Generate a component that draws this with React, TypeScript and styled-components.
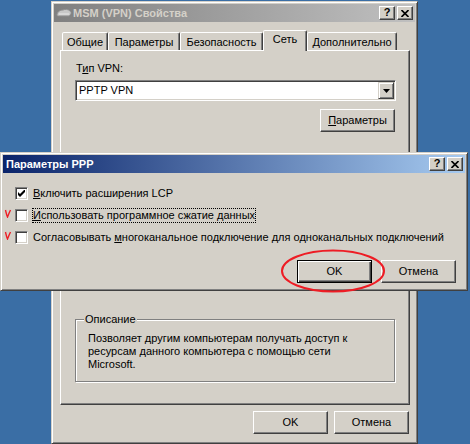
import styled, { createGlobalStyle, css } from "styled-components";

const GlobalStyle = createGlobalStyle`
  html, body {
    margin: 0;
    padding: 0;
  }
  body {
    background: #3a6ea5;
    font-family: "Liberation Sans", Arial, sans-serif;
    font-size: 11px;
    line-height: 13px;
    color: #000;
  }
`;

const Desktop = styled.div`
  position: relative;
  width: 470px;
  height: 444px;
  overflow: hidden;
  background: #3a6ea5;
`;

const Window = styled.div<{ $left: number; $top: number; $width: number; $height: number }>`
  position: absolute;
  left: ${(p) => p.$left}px;
  top: ${(p) => p.$top}px;
  width: ${(p) => p.$width}px;
  height: ${(p) => p.$height}px;
  box-sizing: border-box;
  display: flex;
  flex-direction: column;
  background: #d4d0c8;
  border: 1px solid;
  border-color: #d4d0c8 #404040 #404040 #d4d0c8;
  box-shadow: inset 1px 1px #fff, inset -1px -1px #808080;
  padding: 2px;
`;

const TitleBar = styled.div<{ $active?: boolean }>`
  flex: none;
  height: 18px;
  display: flex;
  align-items: center;
  padding: 0 2px;
  background: ${(p) =>
    p.$active
      ? "linear-gradient(to right, #0a246a, #a6caf0)"
      : "linear-gradient(to right, #808080, #c0c0c0)"};
  color: ${(p) => (p.$active ? "#fff" : "#d4d0c8")};
  font-weight: bold;
`;

const TitleText = styled.span`
  flex: 1;
  margin-left: 1px;
  white-space: nowrap;
`;

const CaptionButton = styled.div`
  width: 16px;
  height: 14px;
  box-sizing: border-box;
  display: flex;
  align-items: center;
  justify-content: center;
  background: #d4d0c8;
  border: 1px solid;
  border-color: #fff #404040 #404040 #fff;
  box-shadow: inset -1px -1px #808080;
  color: #000;
  font-size: 11px;
  font-weight: bold;
  & + & {
    margin-left: 2px;
  }
`;

const SheetBody = styled.div`
  flex: 1;
  display: flex;
  flex-direction: column;
  padding: 8px 5px 0 6px;
`;

const TabStrip = styled.div`
  height: 20px;
  display: flex;
  align-items: flex-end;
  padding-left: 2px;
`;

const Tab = styled.div<{ $width: number; $selected?: boolean }>`
  box-sizing: border-box;
  width: ${(p) => p.$width}px;
  height: ${(p) => (p.$selected ? 21 : 18)}px;
  margin-bottom: ${(p) => (p.$selected ? -1 : 0)}px;
  padding-top: ${(p) => (p.$selected ? 2 : 3)}px;
  position: relative;
  z-index: ${(p) => (p.$selected ? 1 : 0)};
  background: #d4d0c8;
  border: 1px solid;
  border-bottom: none;
  border-color: #fff #404040 transparent #fff;
  border-radius: 2px 2px 0 0;
  box-shadow: inset -1px 0 #808080;
  text-align: center;
  white-space: nowrap;
`;

const TabPanel = styled.div`
  height: 355px;
  box-sizing: border-box;
  display: flex;
  flex-direction: column;
  border: 1px solid;
  border-color: #fff #404040 #404040 #fff;
  box-shadow: inset -1px -1px #808080;
  padding: 11px 13px 22px 14px;
`;

const FieldLabel = styled.div`
  padding-left: 1px;
`;

const U = styled.span`
  text-decoration: underline;
`;

const Combo = styled.div`
  margin-top: 5px;
  height: 21px;
  box-sizing: border-box;
  display: flex;
  align-items: center;
  background: #fff;
  border: 1px solid;
  border-color: #808080 #fff #fff #808080;
  box-shadow: inset 1px 1px #404040, inset -1px -1px #d4d0c8;
  padding: 1px;
`;

const ComboText = styled.span`
  flex: 1;
  padding-left: 2px;
`;

const DropButton = styled.div`
  width: 16px;
  height: 17px;
  box-sizing: border-box;
  display: flex;
  align-items: center;
  justify-content: center;
  background: #d4d0c8;
  border: 1px solid;
  border-color: #d4d0c8 #404040 #404040 #d4d0c8;
  box-shadow: inset 1px 1px #fff, inset -1px -1px #808080;
`;

const PushButton = styled.button<{ $default?: boolean }>`
  width: 75px;
  height: 23px;
  box-sizing: border-box;
  padding: 0;
  font: inherit;
  color: #000;
  background: #d4d0c8;
  border: 1px solid;
  border-color: #fff #404040 #404040 #fff;
  box-shadow: inset -1px -1px #808080;
  border-radius: 0;
  ${(p) =>
    p.$default &&
    css`
      border: 1px solid #000;
      box-shadow: inset 1px 1px #fff, inset -1px -1px #404040, inset -2px -2px #808080;
    `}
`;

const SideButton = styled(PushButton)`
  align-self: flex-end;
  margin-top: 8px;
  margin-right: 1px;
`;

const GroupBox = styled.div`
  position: relative;
  margin-top: auto;
  margin-right: 1px;
  height: 63px;
  box-sizing: border-box;
  border: 1px solid #808080;
  box-shadow: inset 1px 1px #fff, 1px 1px #fff;
  padding: 12px 12px 0 12px;
`;

const GroupLegend = styled.span`
  position: absolute;
  top: -7px;
  left: 8px;
  padding: 0 1px;
  background: #d4d0c8;
`;

const ButtonRow = styled.div<{ $gap: number; $right: number }>`
  display: flex;
  justify-content: flex-end;
  gap: ${(p) => p.$gap}px;
  padding-right: ${(p) => p.$right}px;
`;

const DialogBody = styled.div`
  flex: 1;
  display: flex;
  flex-direction: column;
  padding: 13px 9px 0 0;
`;

const CheckRow = styled.div`
  height: 15px;
  display: flex;
  align-items: center;
  & + & {
    margin-top: 7px;
  }
`;

const MarkSlot = styled.div`
  width: 12px;
  height: 15px;
  display: flex;
  align-items: flex-start;
  justify-content: flex-start;
  padding-top: 1px;
  box-sizing: border-box;
`;

const CheckBox = styled.div`
  width: 13px;
  height: 13px;
  box-sizing: border-box;
  display: flex;
  align-items: center;
  justify-content: center;
  background: #fff;
  border: 1px solid;
  border-color: #808080 #fff #fff #808080;
  box-shadow: inset 1px 1px #404040, inset -1px -1px #d4d0c8;
`;

const CheckLabel = styled.span<{ $focused?: boolean }>`
  margin-left: 4px;
  border: 1px dotted ${(p) => (p.$focused ? "#000" : "transparent")};
  white-space: nowrap;
`;

const DialogButtons = styled(ButtonRow)`
  margin-top: 15px;
`;

const BottomButtons = styled(ButtonRow)`
  margin-top: 6px;
`;

const AnnotationLayer = styled.svg`
  position: absolute;
  left: 0;
  top: 0;
  pointer-events: none;
`;

function TitleIcon() {
  return (
    <svg width="16" height="16" viewBox="0 0 16 16">
      <path
        d="M1 10 C1 7 4 5 7 5 C9 4 12 4 14 6 C16 7 15 10 13 11 L3 11 C2 11 1 11 1 10 Z"
        fill="#c8c8c8"
        stroke="#909090"
        strokeWidth="1"
      />
      <path d="M3 9 L13 9" stroke="#e8e8e8" strokeWidth="1" />
    </svg>
  );
}

function CaptionButtons() {
  return (
    <>
      <CaptionButton>
        <span style={{ lineHeight: "11px", marginTop: -1 }}>?</span>
      </CaptionButton>
      <CaptionButton>
        <svg width="8" height="7" viewBox="0 0 8 7">
          <path d="M0.5 0 L7.5 7 M7.5 0 L0.5 7" stroke="#000" strokeWidth="1.6" />
        </svg>
      </CaptionButton>
    </>
  );
}

function CheckMark() {
  return (
    <svg width="7" height="7" viewBox="0 0 7 7">
      <path d="M0 2 L2 4 L7 -1 L7 2 L2 7 L0 5 Z" fill="#000" />
    </svg>
  );
}

function RedTick() {
  return (
    <svg width="9" height="9" viewBox="0 0 9 9">
      <path d="M2.5 1 C3 3 3.5 6 4.5 8 C5.5 5.5 6.5 3 7.5 1" fill="none" stroke="#ee1c24" strokeWidth="1.4" />
    </svg>
  );
}

const tabs = [
  { label: "Общие", width: 46 },
  { label: "Параметры", width: 72 },
  { label: "Безопасность", width: 83 },
  { label: "Сеть", width: 44, selected: true },
  { label: "Дополнительно", width: 90 },
];

export default function App() {
  return (
    <>
      <GlobalStyle />
      <Desktop>
        <Window $left={51} $top={1} $width={367} $height={443}>
          <TitleBar>
            <TitleIcon />
            <TitleText>MSM (VPN) Свойства</TitleText>
            <CaptionButtons />
          </TitleBar>
          <SheetBody>
            <TabStrip>
              {tabs.map((t) => (
                <Tab key={t.label} $width={t.width} $selected={t.selected}>
                  {t.label}
                </Tab>
              ))}
            </TabStrip>
            <TabPanel>
              <FieldLabel>
                Т<U>и</U>п VPN:
              </FieldLabel>
              <Combo>
                <ComboText>PPTP VPN</ComboText>
                <DropButton>
                  <svg width="7" height="4" viewBox="0 0 7 4">
                    <path d="M0 0 L7 0 L3.5 4 Z" fill="#000" />
                  </svg>
                </DropButton>
              </Combo>
              <SideButton>
                <U>П</U>араметры
              </SideButton>
              <GroupBox>
                <GroupLegend>Описание</GroupLegend>
                Позволяет другим компьютерам получать доступ к
                <br />
                ресурсам данного компьютера с помощью сети
                <br />
                Microsoft.
              </GroupBox>
            </TabPanel>
            <BottomButtons $gap={6} $right={1}>
              <PushButton>OK</PushButton>
              <PushButton>Отмена</PushButton>
            </BottomButtons>
          </SheetBody>
        </Window>

        <Window $left={0} $top={152} $width={468} $height={139}>
          <TitleBar $active>
            <TitleText>Параметры PPP</TitleText>
            <CaptionButtons />
          </TitleBar>
          <DialogBody>
            <CheckRow>
              <MarkSlot />
              <CheckBox>
                <CheckMark />
              </CheckBox>
              <CheckLabel>
                <U>В</U>ключить расширения LCP
              </CheckLabel>
            </CheckRow>
            <CheckRow>
              <MarkSlot>
                <RedTick />
              </MarkSlot>
              <CheckBox />
              <CheckLabel $focused>
                <U>И</U>спользовать программное сжатие данных
              </CheckLabel>
            </CheckRow>
            <CheckRow>
              <MarkSlot>
                <RedTick />
              </MarkSlot>
              <CheckBox />
              <CheckLabel>
                Согласовывать <U>м</U>ногоканальное подключение для одноканальных подключений
              </CheckLabel>
            </CheckRow>
            <DialogButtons $gap={9} $right={0}>
              <PushButton $default>OK</PushButton>
              <PushButton>Отмена</PushButton>
            </DialogButtons>
          </DialogBody>
        </Window>

        <AnnotationLayer width="470" height="444" viewBox="0 0 470 444">
          <ellipse cx="333" cy="271" rx="51" ry="20.5" fill="none" stroke="#ee1c24" strokeWidth="2" />
        </AnnotationLayer>
      </Desktop>
    </>
  );
}
